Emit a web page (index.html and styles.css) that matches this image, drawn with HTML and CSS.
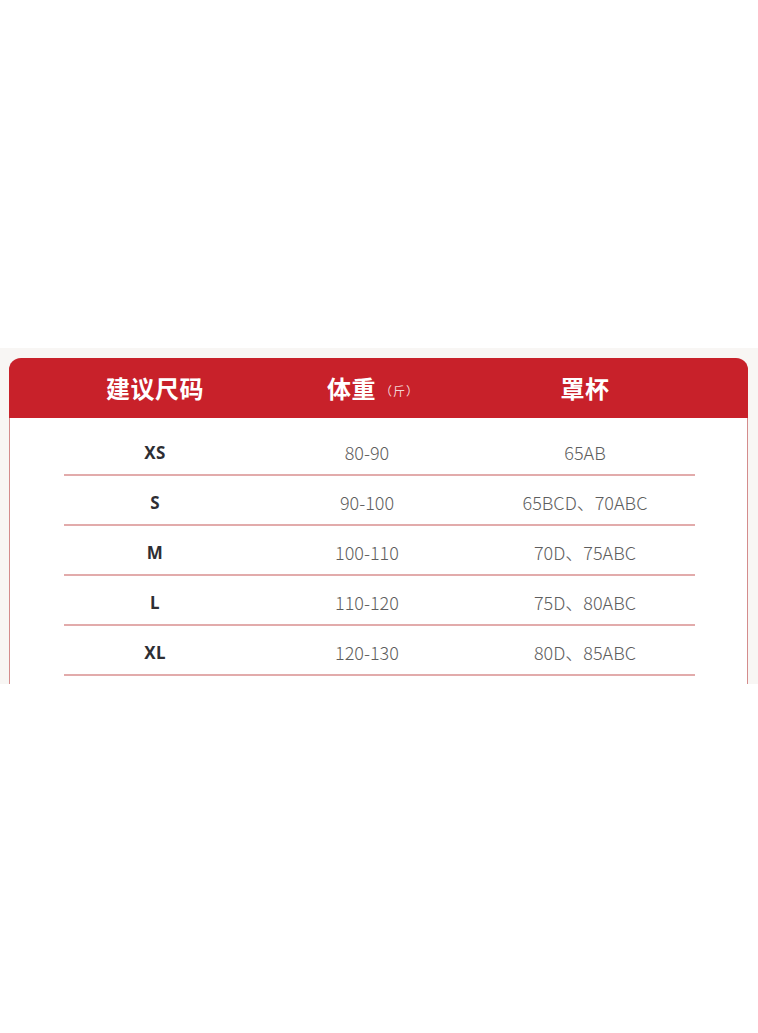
FILE: index.html
```html
<!DOCTYPE html>
<html lang="zh-CN">
<head>
<meta charset="utf-8">
<title>尺码表</title>
<link rel="stylesheet" href="styles.css">
</head>
<body>
<div class="top-space"></div>
<section class="band">
  <div class="card">
    <div class="head">
      <div class="hcell">建议尺码</div>
      <div class="hcell hcell-w">体重<span class="unit">（斤）</span></div>
      <div class="hcell">罩杯</div>
    </div>
    <div class="rows">
      <div class="row"><div class="size">XS</div><div class="val">80-90</div><div class="val">65AB</div></div>
      <div class="row"><div class="size">S</div><div class="val">90-100</div><div class="val">65BCD、70ABC</div></div>
      <div class="row"><div class="size">M</div><div class="val">100-110</div><div class="val">70D、75ABC</div></div>
      <div class="row"><div class="size">L</div><div class="val">110-120</div><div class="val">75D、80ABC</div></div>
      <div class="row"><div class="size">XL</div><div class="val">120-130</div><div class="val">80D、85ABC</div></div>
    </div>
  </div>
</section>
</body>
</html>
```
FILE: styles.css
```css
html, body {
  margin: 0;
  padding: 0;
  background: #ffffff;
}
body {
  font-family: "Noto Sans CJK SC", "Noto Sans", sans-serif;
  width: 758px;
  height: 1033px;
  overflow: hidden;
}
.top-space {
  height: 348px;
}
.band {
  height: 336px;
  background: #f8f6f4;
  padding: 10px 10px 0 9px;
  box-sizing: border-box;
  overflow: hidden;
}
.card {
  background: #ffffff;
  border: 1px solid #d48c8c;
  border-top: none;
  border-radius: 12px 12px 0 0;
  height: 340px;
}
.head {
  height: 60px;
  background: #c8212a;
  border-radius: 12px 12px 0 0;
  margin: 0 -1px;
  display: grid;
  grid-template-columns: 182px 242px 194px;
  padding-left: 55px;
  align-items: center;
  color: #ffffff;
}
.hcell {
  text-align: center;
  font-size: 24px;
  font-weight: 700;
  letter-spacing: 0.5px;
  line-height: 1;
}
.hcell-w {
  padding-left: 12px;
}
.unit {
  font-size: 12px;
  font-weight: 400;
  color: #f3d6d6;
  letter-spacing: 1px;
  margin-left: 4px;
  vertical-align: 2px;
}
.rows {
  padding-top: 8px;
  margin: 0 52px 0 54px;
}
.row {
  display: grid;
  grid-template-columns: 182px 242px 194px;
  height: 48px;
  border-bottom: 2px solid #e2abab;
  align-items: center;
}
.size, .val {
  padding-top: 4px;
}
.size {
  text-align: center;
  font-family: "Noto Sans", "Noto Sans CJK SC", sans-serif;
  font-weight: 700;
  font-size: 17px;
  letter-spacing: 0.3px;
  color: #2e2e33;
}
.val {
  text-align: center;
  font-family: "Noto Sans CJK SC", "Noto Sans", sans-serif;
  font-weight: 300;
  font-size: 18px;
  color: #5e5e5e;
}
```
